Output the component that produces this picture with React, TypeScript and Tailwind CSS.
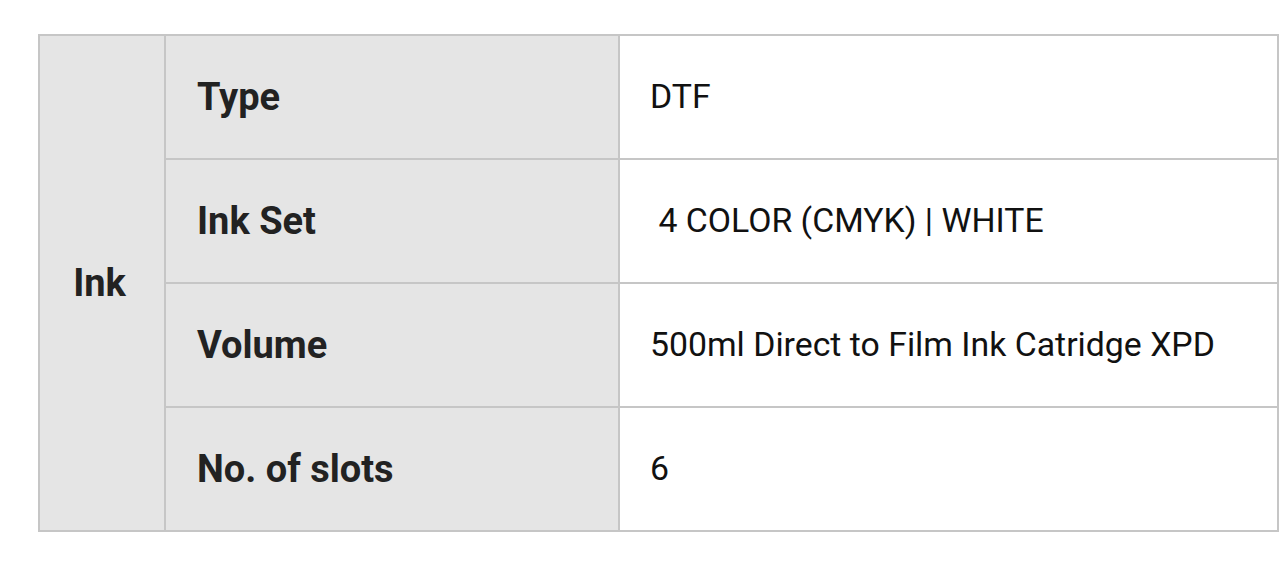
const rows = [
  { label: 'Type', value: 'DTF' },
  { label: 'Ink Set', value: '\u00a04 COLOR (CMYK) | WHITE' },
  { label: 'Volume', value: '500ml Direct to Film Ink Catridge XPD' },
  { label: 'No. of slots', value: '6' },
]

export default function App() {
  return (
    <div className="min-h-[580px] bg-white pl-[38px] pt-[34px] font-['Roboto',sans-serif]">
      <table className="w-[1241px] table-fixed border-collapse border-2 border-[#c6c6c6]">
        <colgroup>
          <col className="w-[126px]" />
          <col className="w-[454px]" />
          <col />
        </colgroup>
        <tbody>
          {rows.map((row, i) => (
            <tr key={row.label} className="h-[124px]">
              {i === 0 && (
                <th
                  rowSpan={4}
                  className="border-2 border-[#c6c6c6] bg-[#e5e5e5] pr-[5px] text-center text-[38px] leading-none font-bold text-[#222]"
                >
                  Ink
                </th>
              )}
              <th className="border-2 border-[#c6c6c6] bg-[#e5e5e5] pl-[31px] text-left text-[38px] leading-none font-bold text-[#222]">
                {row.label}
              </th>
              <td className="border-2 border-[#c6c6c6] bg-white pl-[30px] text-[33.8px] leading-none text-[#111]">
                {row.value}
              </td>
            </tr>
          ))}
        </tbody>
      </table>
    </div>
  )
}
